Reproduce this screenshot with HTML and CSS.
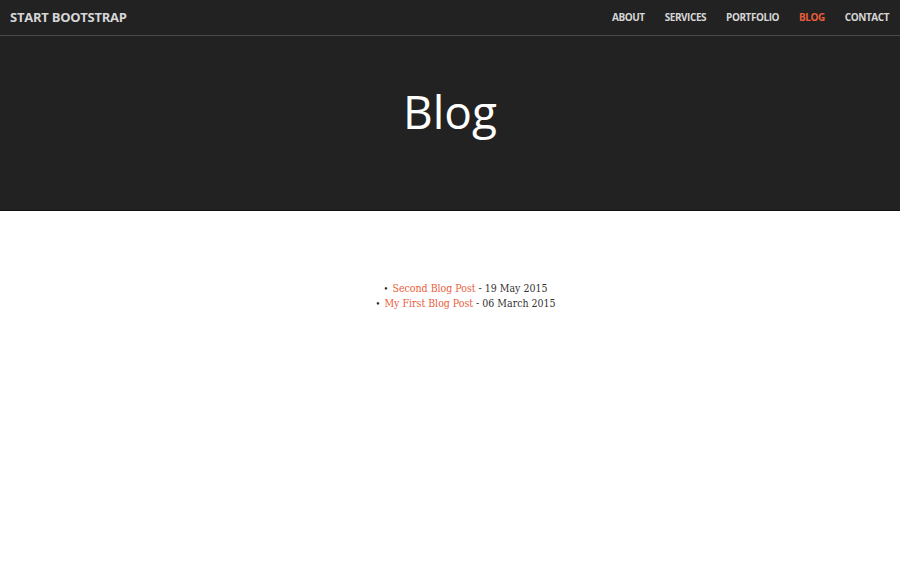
FILE: index.html
```html
<!DOCTYPE html>
<html>
<head>
<meta charset="utf-8">
<link rel="stylesheet" href="styles.css">
</head>
<body>
<nav class="navbar">
  <a class="brand" href="#">Start Bootstrap</a>
  <ul class="nav-links">
    <li><a href="#">About</a></li>
    <li><a href="#">Services</a></li>
    <li><a href="#">Portfolio</a></li>
    <li><a class="active" href="#">Blog</a></li>
    <li><a href="#">Contact</a></li>
  </ul>
</nav>
<header class="hero">
  <h1>Blog</h1>
</header>
<main class="content">
  <ul class="posts">
    <li><a href="#">Second Blog Post</a> - 19 May 2015</li>
    <li><a href="#">My First Blog Post</a> - 06 March 2015</li>
  </ul>
</main>
</body>
</html>
```

FILE: styles.css
```css
html, body {
  margin: 0;
  padding: 0;
  background: #fff;
}
.navbar {
  height: 35px;
  box-sizing: content-box;
  background: #222;
  border-bottom: 1px solid #4a4a4a;
  display: flex;
  align-items: center;
  justify-content: space-between;
  padding: 0 11px 0 10px;
  font-family: "Open Sans", sans-serif;
  line-height: 14px;
}
.brand {
  color: #d6d6d6;
  font-weight: 700;
  font-size: 13px;
  text-transform: uppercase;
  text-decoration: none;
  letter-spacing: -0.25px;
  margin-top: -2px;
}
.nav-links {
  list-style: none;
  display: flex;
  gap: 20px;
  margin: -3px 0 0;
  padding: 0;
}
.nav-links a {
  color: #d6d6d6;
  font-weight: 700;
  font-size: 10px;
  letter-spacing: -0.45px;
  text-transform: uppercase;
  text-decoration: none;
}
.nav-links a.active {
  color: #e95d3c;
}
.hero {
  background: #222;
  height: 174px;
  border-bottom: 1px solid #111;
  display: flex;
  justify-content: center;
}
.hero h1 {
  margin: 45px 0 0;
  color: #fff;
  font-family: "Open Sans", sans-serif;
  font-weight: 400;
  font-size: 46px;
  line-height: 60px;
}
.content {
  padding-top: 70px;
  font-family: "DejaVu Serif", serif;
  font-stretch: condensed;
  font-size: 10.5px;
  color: #333;
}
.posts {
  margin: 0;
  padding: 0 0 0 40px;
  text-align: center;
  list-style: none;
  line-height: 14px;
}
.posts li::before {
  content: "\2022";
  display: inline-block;
  width: 9px;
  margin-left: -9px;
  text-align: left;
  color: #222;
  font-size: 9px;
}
.posts a {
  color: #e95d3c;
  text-decoration: none;
}
```
